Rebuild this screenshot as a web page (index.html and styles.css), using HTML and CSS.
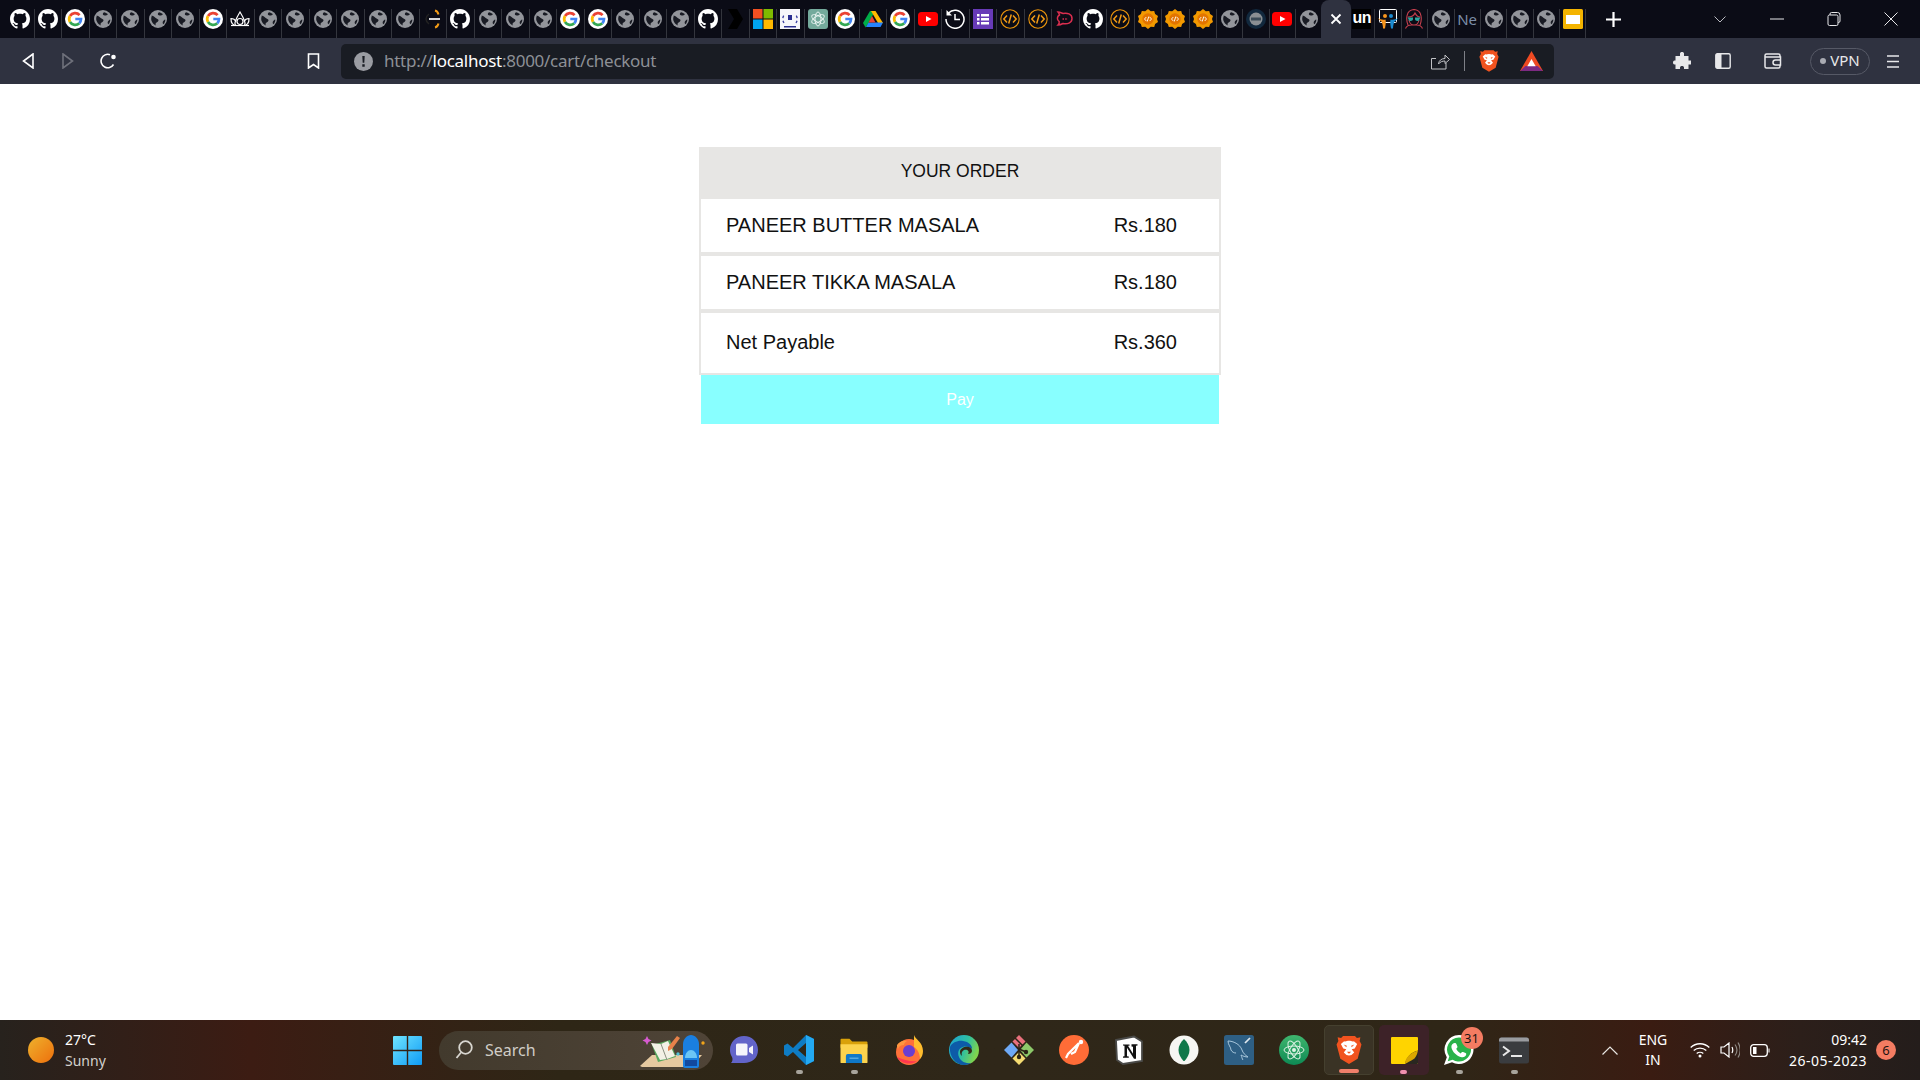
FILE: index.html
```html
<!DOCTYPE html>
<html lang="en">
<head>
<meta charset="utf-8">
<title>Checkout</title>
<link rel="stylesheet" href="styles.css">
</head>
<body>
<svg class="defs" aria-hidden="true">
<symbol id="gh" viewBox="0 0 16 16"><path fill="#fff" d="M8 0C3.58 0 0 3.58 0 8c0 3.54 2.29 6.53 5.47 7.59.4.07.55-.17.55-.38 0-.19-.01-.82-.01-1.49-2.01.37-2.53-.49-2.69-.94-.09-.23-.48-.94-.82-1.13-.28-.15-.68-.52-.01-.53.63-.01 1.08.58 1.23.82.72 1.21 1.87.87 2.33.66.07-.52.28-.87.51-1.07-1.78-.2-3.64-.89-3.64-3.95 0-.87.31-1.59.82-2.15-.08-.2-.36-1.02.08-2.12 0 0 .67-.21 2.2.82.64-.18 1.32-.27 2-.27.68 0 1.36.09 2 .27 1.53-1.04 2.2-.82 2.2-.82.44 1.1.16 1.92.08 2.12.51.56.82 1.27.82 2.15 0 3.07-1.87 3.75-3.65 3.95.29.25.54.73.54 1.48 0 1.07-.01 1.93-.01 2.2 0 .21.15.46.55.38A8.013 8.013 0 0016 8c0-4.42-3.58-8-8-8z"/></symbol>
<symbol id="globe" viewBox="0 0 20 20"><circle cx="10" cy="10" r="9" fill="#93959b"/><path fill="#191b24" d="M3 6.5c2 .2 3.4 1 4.4 2.3.8 1 2.4 1 3 2 .5 1-.6 2.300-1.800 2.700-1 .4-1.200 1.500-.9 3-2-1-3.600-2.800-4.300-5-.3-1.600-.3-3.500.6-5zM11 3.200c1.400.2 2.800.9 3.800 1.800-.4 1.200-1.300 1.600-2.300 1.400-1.200-.2-2.300-.1-2.600-1-.2-.8.300-1.600 1.100-2.200z"/><path fill="#191b24" d="M17.300 10.500c.1 1.800-.6 3.500-1.800 4.800-.8-.6-1-1.500-.7-2.500.4-1.100 1.400-1.900 2.500-2.300z"/></symbol>
<symbol id="g" viewBox="0 0 20 20"><circle cx="10" cy="10" r="10" fill="#fff"/><path fill="none" stroke="#ea4335" stroke-width="2.700" d="M14.600 6.100A6 6 0 0 0 5 7"/><path fill="none" stroke="#fbbc05" stroke-width="2.700" d="M5 7a6 6 0 0 0 0 6"/><path fill="none" stroke="#34a853" stroke-width="2.700" d="M5 13a6 6 0 0 0 9.300 1.200"/><path fill="none" stroke="#4285f4" stroke-width="2.700" d="M14.300 14.200A6 6 0 0 0 16 10H10.300"/></symbol>
<symbol id="crown" viewBox="0 0 20 20"><g fill="none" stroke="#fff" stroke-width="1.200"><path d="M1 16.500h18"/><path d="M6 16.500C3.500 15.500 6 9.500 10 3c4 6.500 6.500 12.500 4 13.500"/><path d="M6 16.500C3 16.500 .8 14 1 9.500c2 0 4 1 5 3M14 16.500c3 0 5.200-2.500 5-7-2 0-4 1-5 3"/><circle cx="10" cy="12.500" r="3"/></g></symbol>
<symbol id="bolt" viewBox="0 0 20 20"><path fill="none" stroke="#f29b16" stroke-width="2" d="M12 1.500c2 .5 3 2 3.500 4M12 18.500c2-.5 3-2 3.500-4"/><path fill="none" stroke="#222" stroke-width="1.500" d="M6 5c-2 1.500-3 3-3 5s1 3.500 3 5"/><path stroke="#d8d8d8" stroke-width="2" d="M6 10h11"/></symbol>
<symbol id="chev" viewBox="0 0 20 20"><path fill="#000" d="M3 0h9l6 10-6 10H3l6-10z"/></symbol>
<symbol id="ms" viewBox="0 0 20 20"><path fill="#f25022" d="M0 0h9.500v9.500H0z"/><path fill="#7fba00" d="M10.500 0H20v9.500h-9.500z"/><path fill="#00a4ef" d="M0 10.500h9.500V20H0z"/><path fill="#ffb900" d="M10.500 10.500H20V20h-9.500z"/></symbol>
<symbol id="iiit" viewBox="0 0 20 20"><path fill="#f6f6fa" d="M0 0h20v20H0z"/><path fill="none" stroke="#3a3fa0" stroke-width="1.300" stroke-dasharray="2.500 2.500" d="M4 14a7 7 0 0 1 1-9M16 14a7 7 0 0 0-1-9"/><path fill="#2a2f8f" d="M8 6h4v5H8zM4 17h12v1.600H4z"/></symbol>
<symbol id="gpt" viewBox="0 0 20 20"><rect width="20" height="20" rx="3" fill="#74aa9c"/><g fill="none" stroke="#e8f3f0" stroke-width="1"><ellipse cx="10" cy="10" rx="3" ry="7"/><ellipse cx="10" cy="10" rx="3" ry="7" transform="rotate(60 10 10)"/><ellipse cx="10" cy="10" rx="3" ry="7" transform="rotate(120 10 10)"/></g></symbol>
<symbol id="drive" viewBox="0 0 20 20"><path fill="#00ac47" d="M7 2h5L5 15l-2.500 3.500L0 14z"/><path fill="#ffba00" d="M8 2h4.500L20 14h-5z"/><path fill="#2684fc" d="M5.500 13.500H20L17.500 18H3z"/><path fill="#ea4335" d="M9 7l3.500 6.500h-7z"/></symbol>
<symbol id="yt" viewBox="0 0 20 20"><rect y="3" width="20" height="14" rx="3.500" fill="#f00"/><path fill="#fff" d="M8 7l5.500 3L8 13z"/></symbol>
<symbol id="hist" viewBox="0 0 20 20"><path fill="none" stroke="#fff" stroke-width="1.500" d="M3.500 4A9 9 0 1 1 1 10M10 5v5.500h5"/><path fill="#fff" d="M1.500 1v5.500H7z"/></symbol>
<symbol id="forms" viewBox="0 0 20 20"><path fill="#673ab7" d="M0 0h20v20H0z"/><path fill="#fff" d="M4 5h2.500v2.500H4zM8 5h8v2.500H8zM4 9h2.500v2.500H4zM8 9h8v2.500H8zM4 13h2.500v2.500H4zM8 13h8v2.500H8z"/></symbol>
<symbol id="code" viewBox="0 0 20 20"><circle cx="10" cy="10" r="9.200" fill="none" stroke="#e8930c" stroke-width="1.100"/><path fill="none" stroke="#f29b16" stroke-width="1.500" d="M7 6.500L3.800 10 7 13.500M13 6.500l3.200 3.500-3.200 3.500M11.300 5.500l-2.600 9"/></symbol>
<symbol id="chat" viewBox="0 0 20 20"><path fill="none" stroke="#d92e4f" stroke-width="1.500" d="M3 3c2 0 3.500 1 5 1.500 4-1 9 .5 9 5s-5 6-9 5c-1.500.8-3 1.500-5 1.500 1-1 1.500-2 1.200-3.300C1.500 10.500 2 7.500 4.500 6 4.300 5 3.800 4 3 3z"/><path stroke="#d92e4f" stroke-width="1.500" stroke-dasharray="1.500 1.200" d="M7.500 10h5.500"/></symbol>
<symbol id="sun" viewBox="0 0 20 20"><path fill="#f29900" d="M10 0l2.800 2.200 3.400-.2.900 3.100 2.900 1.800-1 3.100 1 3.100-2.900 1.800-.9 3.100-3.400-.2L10 20l-2.800-2.200-3.400.2-.9-3.100L0 13.100l1-3.100-1-3.100 2.900-1.800.9-3.100 3.400.2z"/><circle cx="10" cy="10" r="5.700" fill="#e37400"/><path fill="none" stroke="#fff" stroke-width=".9" d="M8.300 8L6.500 10l1.800 2M11.700 8l1.800 2-1.800 2M10.800 7.500l-1.600 5"/></symbol>
<symbol id="dark" viewBox="0 0 20 20"><circle cx="10" cy="10" r="10" fill="#11283d"/><circle cx="10" cy="10" r="6.500" fill="#8a8f93"/><path fill="#3a4a56" d="M5 8.500h10v3H5z"/></symbol>
<symbol id="slideshare" viewBox="0 0 20 20"><rect x="1.500" y=".5" width="17" height="13" rx="1" fill="none" stroke="#fff" stroke-width="1"/><circle cx="7" cy="7" r="2" fill="#f7941d"/><circle cx="13" cy="7" r="2" fill="#1b8bd1"/><path fill="#f7941d" d="M0 9c2 1.500 5 2 7.500 1.500.8 3-.2 6.500-.5 9H5c0-2-.5-5-1.500-7C2 11.500 1 10.500 0 9z"/><path fill="#1b8bd1" d="M20 9c-2 1.500-5 2-7.500 1.500-.8 3 .2 6.500.5 9h2c0-2 .5-5 1.500-7 1.500-1 2.500-2 3.500-3.500z"/></symbol>
<symbol id="woman" viewBox="0 0 20 20"><path fill="none" stroke="#c8404f" stroke-width="1.100" d="M4 16C2 11 1.500 1 10 .5 18.500 1 18 11 16 16M4 8c3 0 6-1.500 7-4 1 2 3 4 5 4M5 11c.5 3 2.500 5 5 5s4.500-2 5-5M1.500 19.500c1-2.500 3.500-3.500 6-3.500h5c2.500 0 5 1 6 3.500"/><path fill="#2ba5a0" d="M3.500 8.500h5.500v1.500c0 1-1 2-2.500 2S4.500 11 4.500 10zM11 8.500h5.500l-1 1.500c0 1-.5 2-2 2S11 11 11 10z"/></symbol>
<symbol id="slides" viewBox="0 0 20 20"><rect width="20" height="20" rx="1.500" fill="#f4b400"/><path fill="#fff" d="M3 6h14v9H3z"/></symbol>
<symbol id="lion" viewBox="0 0 24 26"><path fill="#f1531f" d="M6.500 0h11l1.800 2 3.200-.7-.7 3.300L23.500 8 20 21l-8 5-8-5L.5 8l1.700-3.400L1.500 1.300 4.700 2z"/><path fill="#fff" d="M12 4.500c-1.800 0-3 .9-4.500.4L4.500 7.500l2.200 4 2.800.7-2.300 3 2.500 2.300 2.300.6 2.300-.6 2.500-2.300-2.300-3 2.800-.7 2.200-4-3-2.600c-1.500.5-2.700-.4-4.500-.4z"/><path fill="#f1531f" d="M7 8l3 1-.5 1.500zM17 8l-3 1 .5 1.500zM10 14.500h4L12 16.500z"/></symbol>
<symbol id="bat" viewBox="0 0 23 20"><path fill="#ef4a22" d="M11.500 0L23 20H0z"/><path fill="#7c2a82" d="M0 20l5.500-5h12L23 20z"/><path fill="#fff" d="M11.500 8l4.200 7.200H7.300z"/></symbol>
<linearGradient id="wg" x1="0" y1="0" x2="1" y2="1"><stop offset="0" stop-color="#6fe4ff"/><stop offset="1" stop-color="#0f9bf5"/></linearGradient>
<symbol id="win" viewBox="0 0 29 29"><path fill="url(#wg)" d="M0 1a1 1 0 0 1 1-1h12.800v13.800H0zM15.200 0H28a1 1 0 0 1 1 1v12.800H15.200zM0 15.200h13.800V29H1a1 1 0 0 1-1-1zM15.200 15.200H29V28a1 1 0 0 1-1 1H15.200z"/></symbol>
</svg>

<div class="app">
  <header class="chrome">
    <div class="tabstrip">
      <div class="tabs">
        <div class="tab"><svg class="fav"><use href="#gh"/></svg></div>
        <div class="tab"><svg class="fav"><use href="#gh"/></svg></div>
        <div class="tab"><svg class="fav"><use href="#g"/></svg></div>
        <div class="tab"><svg class="fav"><use href="#globe"/></svg></div>
        <div class="tab"><svg class="fav"><use href="#globe"/></svg></div>
        <div class="tab"><svg class="fav"><use href="#globe"/></svg></div>
        <div class="tab"><svg class="fav"><use href="#globe"/></svg></div>
        <div class="tab"><svg class="fav"><use href="#g"/></svg></div>
        <div class="tab"><svg class="fav"><use href="#crown"/></svg></div>
        <div class="tab"><svg class="fav"><use href="#globe"/></svg></div>
        <div class="tab"><svg class="fav"><use href="#globe"/></svg></div>
        <div class="tab"><svg class="fav"><use href="#globe"/></svg></div>
        <div class="tab"><svg class="fav"><use href="#globe"/></svg></div>
        <div class="tab"><svg class="fav"><use href="#globe"/></svg></div>
        <div class="tab"><svg class="fav"><use href="#globe"/></svg></div>
        <div class="tab"><svg class="fav"><use href="#bolt"/></svg></div>
        <div class="tab"><svg class="fav"><use href="#gh"/></svg></div>
        <div class="tab"><svg class="fav"><use href="#globe"/></svg></div>
        <div class="tab"><svg class="fav"><use href="#globe"/></svg></div>
        <div class="tab"><svg class="fav"><use href="#globe"/></svg></div>
        <div class="tab"><svg class="fav"><use href="#g"/></svg></div>
        <div class="tab"><svg class="fav"><use href="#g"/></svg></div>
        <div class="tab"><svg class="fav"><use href="#globe"/></svg></div>
        <div class="tab"><svg class="fav"><use href="#globe"/></svg></div>
        <div class="tab"><svg class="fav"><use href="#globe"/></svg></div>
        <div class="tab"><svg class="fav"><use href="#gh"/></svg></div>
        <div class="tab"><svg class="fav"><use href="#chev"/></svg></div>
        <div class="tab"><svg class="fav"><use href="#ms"/></svg></div>
        <div class="tab"><svg class="fav"><use href="#iiit"/></svg></div>
        <div class="tab"><svg class="fav"><use href="#gpt"/></svg></div>
        <div class="tab"><svg class="fav"><use href="#g"/></svg></div>
        <div class="tab"><svg class="fav"><use href="#drive"/></svg></div>
        <div class="tab"><svg class="fav"><use href="#g"/></svg></div>
        <div class="tab"><svg class="fav"><use href="#yt"/></svg></div>
        <div class="tab"><svg class="fav"><use href="#hist"/></svg></div>
        <div class="tab"><svg class="fav"><use href="#forms"/></svg></div>
        <div class="tab"><svg class="fav"><use href="#code"/></svg></div>
        <div class="tab"><svg class="fav"><use href="#code"/></svg></div>
        <div class="tab"><svg class="fav"><use href="#chat"/></svg></div>
        <div class="tab"><svg class="fav"><use href="#gh"/></svg></div>
        <div class="tab"><svg class="fav"><use href="#code"/></svg></div>
        <div class="tab"><svg class="fav"><use href="#sun"/></svg></div>
        <div class="tab"><svg class="fav"><use href="#sun"/></svg></div>
        <div class="tab"><svg class="fav"><use href="#sun"/></svg></div>
        <div class="tab tab-narrow"><svg class="fav"><use href="#globe"/></svg></div>
        <div class="tab tab-narrow"><svg class="fav"><use href="#dark"/></svg></div>
        <div class="tab tab-narrow"><svg class="fav"><use href="#yt"/></svg></div>
        <div class="tab tab-narrow"><svg class="fav"><use href="#globe"/></svg></div>
        <div class="tab tab-active"><svg class="tab-close" viewBox="0 0 12 12"><path d="M1.500 1.500l9 9M10.500 1.500l-9 9"/></svg></div>
        <div class="tab tab-narrow"><span class="fav-un">un</span></div>
        <div class="tab tab-narrow"><svg class="fav"><use href="#slideshare"/></svg></div>
        <div class="tab tab-narrow"><svg class="fav"><use href="#woman"/></svg></div>
        <div class="tab tab-narrow"><svg class="fav"><use href="#globe"/></svg></div>
        <div class="tab tab-narrow"><span class="fav-ne">Ne</span></div>
        <div class="tab tab-narrow"><svg class="fav"><use href="#globe"/></svg></div>
        <div class="tab tab-narrow"><svg class="fav"><use href="#globe"/></svg></div>
        <div class="tab tab-narrow"><svg class="fav"><use href="#globe"/></svg></div>
        <div class="tab tab-narrow"><svg class="fav"><use href="#slides"/></svg></div>
      </div>
      <svg class="newtab" viewBox="0 0 15 15"><path d="M7.500 0v15M0 7.500h15"/></svg>
      <svg class="tabmenu" viewBox="0 0 12 7"><path d="M.5.5L6 6 11.500.5"/></svg>
      <div class="winctl">
        <svg class="winicon" viewBox="0 0 14 14"><path d="M0 7h14"/></svg>
        <svg class="winicon" viewBox="0 0 14 14"><path d="M3 3V2a1.500 1.500 0 0 1 1.500-1.500h6A2.500 2.500 0 0 1 13 3v6a1.500 1.500 0 0 1-1.500 1.500H11"/><rect x="1" y="3" width="10" height="10.500" rx="1.500"/></svg>
        <svg class="winicon" viewBox="0 0 14 14"><path d="M.5.500l13 13M13.500.500l-13 13"/></svg>
      </div>
    </div>
    <div class="toolbar">
      <svg class="tool tool-back" viewBox="0 0 12 16"><path d="M11 1L1.500 8l9.500 7z"/></svg>
      <svg class="tool tool-fwd" viewBox="0 0 12 16"><path d="M1 1l9.500 7L1 15z"/></svg>
      <svg class="tool tool-reload" viewBox="0 0 16 16"><path d="M13.500 11.500A6.700 6.700 0 1 1 10 1.700"/><circle cx="13.500" cy="4" r="2.300" class="solid"/></svg>
      <svg class="tool tool-mark" viewBox="0 0 13 16"><path d="M1.500 1h10v14l-5-3.500-5 3.500z"/></svg>
      <div class="address">
        <svg class="alert" viewBox="0 0 19 19"><circle cx="9.500" cy="9.500" r="9.500"/><path d="M8.300 4h2.400l-.4 6.800H8.700zM8.300 12.300h2.400v2.400H8.300z"/></svg>
        <div class="url">http://<b>localhost</b>:8000/cart/checkout</div>
        <svg class="share" viewBox="0 0 19 18"><path d="M4 17H.5V6.500H5M15 11v6H4M7.500 12c.3-3.500 3-5.500 6.500-5.500V3L18.500 7.500 14 11.500V9c-2.500 0-5 .8-6.500 3z"/></svg>
        <span class="addr-sep"></span>
        <svg class="brave"><use href="#lion"/></svg>
        <svg class="batlogo"><use href="#bat"/></svg>
      </div>
      <svg class="puzzle" viewBox="0 0 18 18"><path d="M7 1.500C7 .5 8 0 9 0s2 .5 2 1.500V4h4.500v4.500H18c.5 0 .5 1 .5 2s-.5 2-1 2h-2V17H11v-1.500c0-1-1-1.500-2-1.500s-2 .5-2 1.500V17H2.500v-4.500H1.500c-1 0-1.500-1-1.500-2s.5-2 1.500-2h1V4H7z"/></svg>
      <svg class="panel" viewBox="0 0 16 16"><rect x=".8" y=".8" width="14.400" height="14.400" rx="1.500"/><path class="solid" d="M1 1h5.500v14H1z"/></svg>
      <svg class="wallet" viewBox="0 0 18 16"><path d="M16 4V2.500A1.500 1.500 0 0 0 14.500 1h-12A1.500 1.500 0 0 0 1 2.500v11A1.500 1.500 0 0 0 2.500 15h12a1.500 1.500 0 0 0 1.500-1.500V12M1.500 4H16.500v8h-5a2.500 2.500 0 0 1 0-5h5"/></svg>
      <div class="vpn"><span class="vpn-dot"></span>VPN</div>
      <svg class="menu" viewBox="0 0 12 13"><path d="M0 1h12M0 6.500h12M0 12h12"/></svg>
    </div>
  </header>

  <main class="page">
    <section class="order">
      <div class="order-box">
        <h2 class="order-title">YOUR ORDER</h2>
        <div class="order-row"><span>PANEER BUTTER MASALA</span><span class="price">Rs.180</span></div>
        <div class="order-row"><span>PANEER TIKKA MASALA</span><span class="price">Rs.180</span></div>
        <div class="order-row order-total"><span>Net Payable</span><span class="price">Rs.360</span></div>
      </div>
      <div class="pay">Pay</div>
    </section>
  </main>

  <footer class="taskbar">
    <div class="weather">
      <span class="sun-disc"></span>
      <div class="weather-text"><div>27°C</div><div class="weather-sub">Sunny</div></div>
    </div>
    <svg class="winlogo"><use href="#win"/></svg>
    <div class="search">
      <svg class="search-icon" viewBox="0 0 18 20"><circle cx="10.500" cy="7.500" r="6.300"/><path d="M6 12.500L1.500 18"/></svg>
      <span>Search</span>
      <svg class="search-art" viewBox="0 0 73 38"><path fill="#e6c9a0" d="M0 35l12-11h50l-8 9c-3 2-6 3-10 3H2z"/><path fill="#5aa85f" d="M12 14l18-5 6 17-18 5z"/><path fill="#f3f1e6" d="M11 12l10 1 7-3 7 15-8 3-7 1z"/><path stroke="#8a8f80" fill="none" d="M21 13l6 16"/><path fill="#e8824a" d="M28 16l9-11 3 2-8 11-4 2z"/><path fill="#d65bd0" d="M7 5l1.500 3 3 1.500-3 1.500L7 14l-1.500-3-3-1.500 3-1.500z"/><circle cx="38" cy="23" r="1.700" fill="#4fc3d9"/><circle cx="63" cy="12" r="1.700" fill="#f2a51a"/><path fill="#1a7fe0" d="M43 13c0-5 4-9 8-9s8 4 8 9v22c0 1-1 2-2 2H45c-1 0-2-1-2-2z"/><path fill="#6cc6f5" d="M45 27c0-5 3-8 6-8s6 3 6 8z"/><path fill="#12499e" d="M45 29h12v6H45z"/></svg>
    </div>
    <div class="apps">
      <div class="app-item"><svg class="app-icon" viewBox="0 0 30 30"><path fill="#6264c9" d="M15 1c8 0 14 6 14 14s-6 13-14 13H2c1.500-1.500 2-4 1-6C1.500 19.500 1 17.500 1 15 1 7 7 1 15 1z"/><path fill="#f4f4fb" d="M7 10a1.500 1.500 0 0 1 1.500-1.500H17a1.500 1.500 0 0 1 1.500 1.500v9a1.500 1.500 0 0 1-1.500 1.500H8.500A1.500 1.500 0 0 1 7 19zM20 13l4-2.500v9L20 17z"/></svg></div>
      <div class="app-item app-open"><svg class="app-icon" viewBox="0 0 30 30"><path fill="#0e7cc4" d="M22 0l8 4v22l-8 4L9 17l-5.500 4.500L0 19.500v-9L3.500 8.500 9 13zM22 8l-8 7 8 7z"/><path fill="#23a9f2" d="M22 0l8 4v22l-8 4z"/></svg></div>
      <div class="app-item app-open"><svg class="app-icon app-wide" viewBox="0 0 30 30"><path fill="#d9a109" d="M0 3a1 1 0 0 1 1-1h9l3 3h16a1 1 0 0 1 1 1v6H0z"/><path fill="#fcd34d" d="M0 8h30v20a1 1 0 0 1-1 1H1a1 1 0 0 1-1-1z"/><path fill="#0f78c8" d="M6 21a2 2 0 0 1 2-2h14a2 2 0 0 1 2 2v8H6z"/><path fill="#7ec8f2" d="M10 23h10v1H10z"/></svg></div>
      <div class="app-item"><svg class="app-icon" viewBox="0 0 30 30"><circle cx="15" cy="17" r="13" fill="#ff7139"/><path fill="#ffbd2e" d="M20 0c1 4 9 7 9 16 0 3-1 6-3 8 0-6-3-10-6-12z"/><path fill="#ff3750" d="M3 22c3 6 13 9 20 4-6 1-13-1-20-4z"/><circle cx="15" cy="16" r="6" fill="#6a3ed0"/><path fill="#ff9640" d="M3 10c2-3 6-5 10-4-2 1-3 3-3 4-3 0-5 1-6 4-1-1-1-3-1-4z"/></svg></div>
      <div class="app-item"><svg class="app-icon" viewBox="0 0 30 30"><defs><linearGradient id="eg" x1="0" y1="0" x2="1" y2=".4"><stop offset="0" stop-color="#1ba0d8"/><stop offset=".6" stop-color="#2fc0a0"/><stop offset="1" stop-color="#7fd34e"/></linearGradient></defs><circle cx="15" cy="15" r="15" fill="url(#eg)"/><path fill="#0d5ba8" d="M1 12c2-5 9-7 13-6 6 1 9 4 9 8-2-2-6-3-9-2-4 1-6 5-4 10 1 3 5 7 12 6-3 2-6 2-7 2C7 30 0 22 1 12z"/><path fill="#332918" d="M11 17c0-4 5-6 9-5 2 1 3 2 3 4 0 2-2 3-4 3 2-3-1-5-4-4-2 1-3 3-2 6-1-1-2-2-2-4z"/></svg></div>
      <div class="app-item"><svg class="app-icon" viewBox="0 0 30 30"><path fill="#e9717d" d="M15 0l6.500 6.500L15 13 8.500 6.500z"/><path fill="#8dc96a" d="M22.500 7.500L30 15l-7.500 7.500L16 15z"/><path fill="#f5dc72" d="M15 17l6.500 6.500L15 30l-6.500-6.500z"/><path fill="#6ea9f5" d="M7.500 7.500L14 15l-6.500 7.500L0 15z"/><path fill="none" stroke="#2b2416" stroke-width="1.500" d="M11 3l8 8M15 9v13M15 14l7 3"/><circle cx="15" cy="22" r="2.200" fill="#2b2416"/><circle cx="22" cy="17" r="2.200" fill="#2b2416"/></svg></div>
      <div class="app-item"><svg class="app-icon" viewBox="0 0 30 30"><circle cx="15" cy="15" r="15" fill="#ff6c37"/><path fill="none" stroke="#fff" stroke-width="2.200" d="M20 8L9 19l-2 4M20 8l-4 9-4 2"/><circle cx="22" cy="7" r="2.200" fill="#fff"/></svg></div>
      <div class="app-item"><svg class="app-icon" viewBox="0 0 30 30"><path fill="#fff" stroke="#4a4a48" stroke-width="1.800" d="M2 5l18-3.500 8 5V26l-19 3-6-4z"/><path fill="#111" d="M9 9.500h6.500v1.200H14l5 8v-7l-1.500-.3V9.300h6v1.100L22 10.700v13h-2l-7-11v8.500l1.800.4v1.100H9v-1.100l1.500-.4V10.700L9 10.500z"/></svg></div>
      <div class="app-item"><svg class="app-icon" viewBox="0 0 30 30"><circle cx="15" cy="15" r="14.500" fill="#f6f6f3"/><path fill="#10784a" d="M15 4c3 3 5.500 6.500 5.500 11S18 23 15.500 26h-1C12 23 9.500 19.500 9.500 15S12 7 15 4z"/></svg></div>
      <div class="app-item"><svg class="app-icon" viewBox="0 0 30 30"><rect width="30" height="30" rx="2.500" fill="#2e5f84"/><path fill="none" stroke="#a8c7dc" stroke-width="1" d="M4 6c5 0 12 3 14 9 1 3 3 5 6 7-3 0-5-1-7-2 1 2 1 4 2 5M4 6c0 4 3 6 3 9 1 2 3 3 5 3"/><path fill="none" stroke="#dfe8ee" stroke-width="1.700" d="M21 8l5-5"/></svg></div>
      <div class="app-item"><svg class="app-icon" viewBox="0 0 30 30"><defs><linearGradient id="ag" x1="0" y1="0" x2="0" y2="1"><stop offset="0" stop-color="#3fb66e"/><stop offset="1" stop-color="#0d8a54"/></linearGradient></defs><circle cx="15" cy="15" r="15" fill="url(#ag)"/><g fill="none" stroke="#dff3e6" stroke-width="1"><ellipse cx="15" cy="15" rx="10" ry="4"/><ellipse cx="15" cy="15" rx="10" ry="4" transform="rotate(60 15 15)"/><ellipse cx="15" cy="15" rx="10" ry="4" transform="rotate(120 15 15)"/></g><circle cx="15" cy="15" r="2" fill="#dff3e6"/></svg></div>
      <div class="app-item app-hl"><svg class="app-icon app-lion"><use href="#lion"/></svg></div>
      <div class="app-item app-hl2"><svg class="app-icon app-sticky" viewBox="0 0 27 27"><rect width="27" height="27" rx="1" fill="#ffd400"/><path fill="#2a2720" d="M27 13.500V26a1 1 0 0 1-1 1H14c1-6 6-12 13-13.500z"/><path fill="#d9a600" d="M14 27c0-6 5-11 13-13.500-1 5-3 8-5 9-2 1-5 3-8 4.500z"/></svg></div>
      <div class="app-item app-open"><svg class="app-icon" viewBox="0 0 30 30"><path fill="#fff" d="M15 0a14.500 14.500 0 1 1-7 27.200L0 30l2.800-7.800A14.500 14.500 0 0 1 15 0z"/><path fill="#29b34a" d="M15 2.500A12 12 0 1 1 8.700 24.700l-5 1.500 1.600-4.800A12 12 0 0 1 15 2.500z"/><path fill="#fff" d="M10.500 8c.9-.3 1.500 0 1.900 1l1 2.500c.2.500 0 1-.4 1.400l-.8.900c1 2 2.500 3.500 4.500 4.600l1-1.100c.4-.4.900-.5 1.400-.3l2.400 1.100c.6.300.9.800.7 1.500-.5 2-2.500 3-4.500 2.600-5-1-9.500-5.500-10.300-10C7.100 10 8.500 8.500 10.500 8z"/></svg><span class="app-badge">31</span></div>
      <div class="app-item app-open"><svg class="app-icon app-wide" viewBox="0 0 30 26"><rect width="30" height="26" rx="2.500" fill="#3a3c3f"/><path fill="#9a9ca0" d="M0 2.500A2.500 2.500 0 0 1 2.500 0h25A2.500 2.500 0 0 1 30 2.500V4H0z"/><path fill="none" stroke="#e8e8e8" stroke-width="2" d="M4 9l6 4.500-6 4.500"/><path stroke="#e8e8e8" stroke-width="2" d="M12 18.500h11"/></svg></div>
    </div>
    <svg class="tray-chev" viewBox="0 0 16 9"><path d="M.5 8.500L8 1l7.500 7.500"/></svg>
    <div class="lang"><div>ENG</div><div>IN</div></div>
    <svg class="tray-wifi" viewBox="0 0 20 16"><path d="M.7 5.500c5-5 13.600-5 18.600 0M3.700 8.500c3.500-3.300 9.100-3.300 12.600 0M6.700 11.500c1.800-1.600 4.800-1.600 6.600 0"/><circle cx="10" cy="14" r="1.500" class="solid"/></svg>
    <svg class="tray-vol" viewBox="0 0 20 16"><path d="M1 5h3l5-4v14l-5-4H1zM12 5c1 2 1 4 0 6"/><path class="dim" d="M15 2.500c2.500 3.500 2.500 7.500 0 11M18 .5c3 5 3 10 0 15"/></svg>
    <svg class="tray-bat" viewBox="0 0 20 13"><rect x=".7" y=".7" width="16.600" height="11.600" rx="3"/><path class="solid" d="M3 3h3.500v7H3z"/><path class="solid" d="M18.500 4.500h1v4h-1z"/></svg>
    <div class="clock"><div>09:42</div><div class="clock-date">26-05-2023</div></div>
    <span class="notif">6</span>
  </footer>
</div>
</body>
</html>
```
FILE: styles.css
```css
* { box-sizing: border-box; }
html, body { margin: 0; padding: 0; height: 100%; }
body { font-family: "Liberation Sans", Arial, sans-serif; background: #fff; overflow: hidden; }
.defs { position: absolute; width: 0; height: 0; overflow: hidden; }
.app { display: flex; flex-direction: column; height: 100vh; }

/* browser chrome */
.chrome { flex: none; }
.tabstrip { display: flex; align-items: flex-start; height: 38px; background: #0b0c16; padding-left: 7px; }
.tabs { display: flex; flex: none; }
.tab { flex: none; width: 27.5px; height: 29px; margin-top: 9px; border-right: 1px solid #33353d; display: flex; justify-content: center; align-items: flex-start; }
.tab-narrow { width: 26.4px; }
.tab-active { width: 30px; height: 38px; margin: 0 -1.800px; padding-top: 13px; background: #2f3240; border: 0; border-radius: 8px 8px 0 0; }
.fav { width: 20px; height: 20px; display: block; }
.tab-close { width: 12px; height: 12px; fill: none; stroke: #fff; stroke-width: 1.800; }
.fav-un { width: 19px; height: 20px; background: #000; color: #fff; font: 700 16px/18px "Liberation Sans", sans-serif; text-align: center; letter-spacing: -.5px; }
.fav-ne { color: #7c8ea8; font: 15px/20px "Noto Sans", sans-serif; width: 20px; overflow: hidden; }
.newtab { flex: none; width: 15px; height: 15px; margin: 12px 0 0 20px; fill: none; stroke: #fff; stroke-width: 2.200; }
.tabmenu { flex: none; width: 12px; height: 7px; margin: 16px 0 0 93px; fill: none; stroke: #b9bac0; stroke-width: 1; }
.winctl { margin-left: auto; display: flex; padding-right: 1px; }
.winicon { flex: none; width: 14px; height: 14px; margin: 12px 21.500px 0; fill: none; stroke: #e8e8ea; stroke-width: 1; }

.toolbar { display: flex; align-items: center; height: 46px; padding-left: 22px; background: #2f3240; }
.tool { flex: none; height: 16px; fill: none; stroke: #fff; stroke-width: 1.600; }
.tool-back { width: 12px; }
.tool-fwd { width: 12px; margin-left: 28px; stroke: #6f717b; }
.tool-reload { width: 16px; margin-left: 26px; }
.solid { fill: currentColor; stroke: none; }
.tool-reload .solid { fill: #fff; }
.tool-mark { width: 13px; margin-left: 191px; }
.address { flex: none; display: flex; align-items: center; width: 1213px; height: 35px; margin-left: 21px; padding: 0 11px 0 13px; border-radius: 5px; background: #191c23; }
.alert { flex: none; width: 19px; height: 19px; fill: #9a9ca2; }
.alert path { fill: #191c23; }
.url { flex: 1; margin-left: 11px; font: 17px/22px "Noto Sans", sans-serif; letter-spacing: -.27px; color: #8d9096; white-space: nowrap; }
.url b { font-weight: 400; color: #fff; }
.share { flex: none; width: 19px; height: 18px; fill: none; stroke: #c2c3c7; stroke-width: 1; }
.addr-sep { flex: none; width: 1px; height: 20px; margin-left: 14px; background: #7e8087; }
.brave { flex: none; width: 20px; height: 22px; margin-left: 14px; }
.batlogo { flex: none; width: 23px; height: 20px; margin-left: 21px; }
.puzzle { flex: none; width: 18px; height: 18px; margin-left: 119px; fill: #e8e8ea; }
.panel { flex: none; width: 16px; height: 16px; margin-left: 24px; fill: none; stroke: #e8e8ea; stroke-width: 1.400; }
.panel .solid { fill: #e8e8ea; }
.wallet { flex: none; width: 18px; height: 16px; margin-left: 33px; fill: none; stroke: #e8e8ea; stroke-width: 1.500; }
.vpn { flex: none; display: flex; align-items: center; justify-content: center; gap: 4px; width: 60px; height: 27px; margin-left: 28px; padding-bottom: 2px; border: 1px solid #565966; border-radius: 14px; font: 15px/1 "Noto Sans", sans-serif; color: #e8e8ea; }
.vpn-dot { width: 6px; height: 6px; margin-top: 2px; border-radius: 50%; background: #a9abb2; }
.menu { flex: none; width: 12px; height: 13px; margin-left: 17px; fill: none; stroke: #e8e8ea; stroke-width: 1.500; }

/* page */
.page { flex: 1; padding-top: 63px; background: #fff; }
.order { width: 522px; margin: 0 auto; color: #111; }
.order-box { border: 2px solid #e7e6e4; background: #e7e6e4; display: flex; flex-direction: column; gap: 4px; }
.order-title { margin: 0 0 -4px; height: 50px; padding-top: 10px; font-size: 17.500px; line-height: 24px; font-weight: 400; text-align: center; background: #e7e6e4; }
.order-row { display: flex; align-items: center; height: 53px; padding: 0 42px 1px 25px; background: #fff; font-size: 20px; }
.order-total { height: 60px; padding-bottom: 1px; }
.price { margin-left: auto; }
.pay { width: 518px; height: 49px; margin: 0 auto; background: #88ffff; color: #fff; font-size: 16px; line-height: 50px; text-align: center; }

/* taskbar */
.taskbar { flex: none; display: flex; align-items: center; height: 60px; font-family: "Noto Sans", sans-serif; color: #fff; background: linear-gradient(90deg, #27221d 0, #3c1c13 250px, #2e2616 560px, #2f2719 1000px, #2f2617 1450px, #3a1c12 1650px, #2c1f1a 1800px, #241d1b 1920px); }
.weather { flex: none; display: flex; align-items: center; width: 393px; padding-left: 28px; }
.sun-disc { flex: none; width: 26px; height: 26px; border-radius: 50%; background: linear-gradient(135deg, #eeb22d, #ee6f0c); }
.weather-text { margin-left: 11px; font-size: 14px; line-height: 21px; }
.weather-sub { color: #d3d1cd; }
.winlogo { flex: none; width: 29px; height: 29px; }
.search { flex: none; display: flex; align-items: center; width: 274px; height: 39px; margin-left: 17px; padding-left: 16px; border-radius: 20px; background: linear-gradient(90deg, #423a2d, #4f4437); font-size: 16px; color: #d0cdc6; }
.search-icon { flex: none; width: 18px; height: 20px; margin-right: 12px; fill: none; stroke: #d8d6d0; stroke-width: 1.800; }
.search-art { flex: none; width: 73px; height: 38px; margin-left: auto; }
.apps { flex: none; display: flex; margin-left: 3.500px; }
.app-item { flex: none; position: relative; display: flex; align-items: center; justify-content: center; width: 55px; height: 50px; }
.app-open::after { content: ""; position: absolute; bottom: 1px; left: 24px; width: 7px; height: 4px; border-radius: 2px; background: #a8a49c; }
.app-icon { width: 30px; height: 30px; display: block; }
.app-wide { width: 30px; height: 27px; }
.app-lion { width: 26px; height: 30px; }
.app-sticky { width: 27px; height: 27px; }
.app-hl { width: 50px; margin: 0 2.500px; border-radius: 5px; border: 1px solid #45402f; background: #3a3325; }
.app-hl::after { content: ""; position: absolute; bottom: 1px; left: 14px; width: 20px; height: 4px; border-radius: 2px; background: #f07f6b; }
.app-hl2 { width: 50px; margin: 0 2.500px; border-radius: 5px; background: #3d2228; }
.app-hl2::after { content: ""; position: absolute; bottom: 1px; left: 21px; width: 7px; height: 4px; border-radius: 2px; background: #f08fae; }
.app-badge { position: absolute; top: 2px; left: 29px; width: 22px; height: 22px; border-radius: 50%; background: #f47c62; color: #1c1411; font-size: 13px; line-height: 22px; text-align: center; }
.tray-chev { flex: none; width: 16px; height: 9px; margin-left: 60.500px; fill: none; stroke: #e8e6e2; stroke-width: 1.200; }
.lang { flex: none; width: 34px; margin-left: 18px; font-size: 14px; line-height: 20px; text-align: center; white-space: nowrap; }
.tray-wifi { flex: none; width: 20px; height: 16px; margin-left: 20px; fill: none; stroke: #fff; stroke-width: 1.300; }
.tray-wifi .solid { fill: #fff; }
.tray-vol { flex: none; width: 20px; height: 16px; margin-left: 10px; fill: none; stroke: #fff; stroke-width: 1.200; }
.tray-vol .dim { stroke: #8d8781; }
.tray-bat { flex: none; width: 20px; height: 13px; margin-left: 10px; fill: none; stroke: #fff; stroke-width: 1.300; }
.tray-bat .solid { fill: #fff; }
.clock { flex: none; width: 90px; margin-left: 7px; font-size: 14px; line-height: 21px; text-align: right; white-space: nowrap; }
.clock-date { letter-spacing: .5px; }
.notif { flex: none; width: 20px; height: 20px; margin-left: 9px; border-radius: 50%; background: #f47c62; color: #1c1411; font-size: 13px; line-height: 20px; text-align: center; }
```
